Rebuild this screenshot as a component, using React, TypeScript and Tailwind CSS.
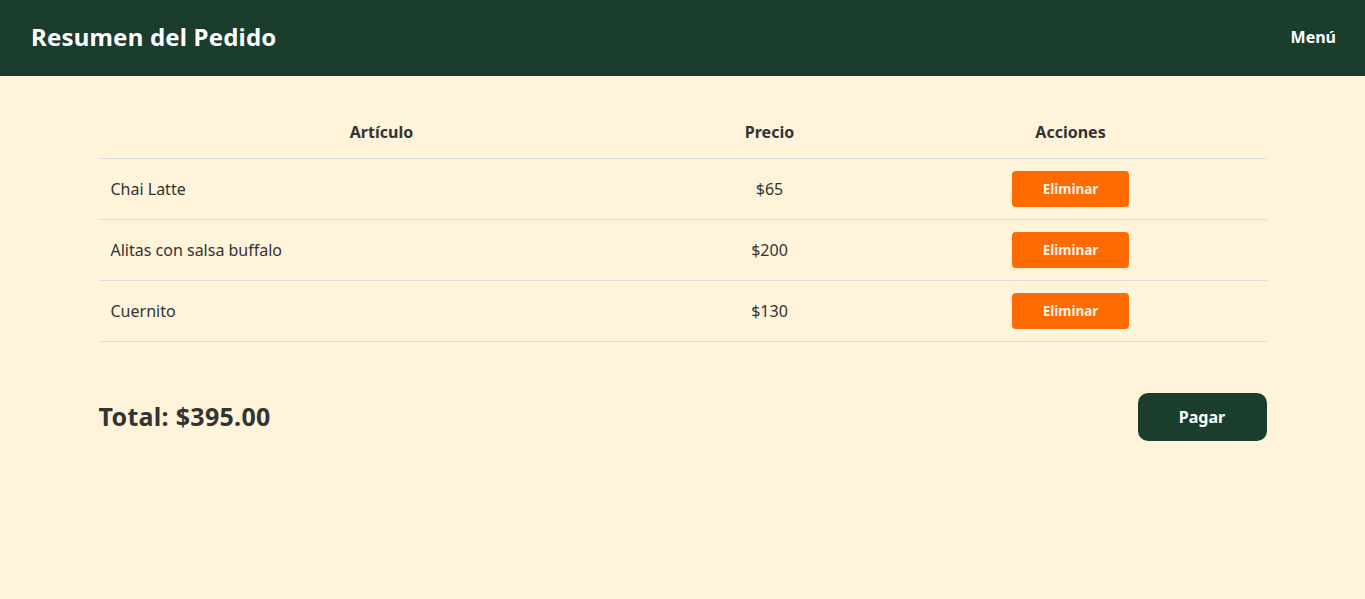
import React from "react";

const items = [
  { name: "Chai Latte", price: "$65" },
  { name: "Alitas con salsa buffalo", price: "$200" },
  { name: "Cuernito", price: "$130" },
];

export default function App() {
  return (
    <div
      className="min-h-[599px] bg-[#fff3d9] text-[#333333]"
      style={{ fontFamily: '"Noto Sans", "Open Sans", sans-serif' }}
    >
      <header className="h-[76px] bg-[#1a3d2e] flex items-center justify-between pl-[31px] pr-[29px] pb-[2px]">
        <h1 className="text-[24px] font-bold text-white tracking-[0.2px]">Resumen del Pedido</h1>
        <nav className="text-[16px] font-bold text-white">Menú</nav>
      </header>
      <main className="w-[1168px] mx-auto pt-[30px]">
        <table className="w-full border-collapse">
          <thead>
            <tr className="border-b border-[#dddddd]">
              <th className="w-[566px] py-[14px] text-[16px] leading-[24px] font-bold text-center">Artículo</th>
              <th className="w-[210px] py-[14px] text-[16px] leading-[24px] font-bold text-center">Precio</th>
              <th className="py-[14px] text-[16px] leading-[24px] font-bold text-center">Acciones</th>
            </tr>
          </thead>
          <tbody>
            {items.map((it) => (
              <tr key={it.name} className="border-b border-[#dddddd]">
                <td className="pl-[12px] pr-[12px] py-[12px] text-[16px] text-left">{it.name}</td>
                <td className="py-[12px] text-[16px] text-center">{it.price}</td>
                <td className="py-[12px] text-center">
                  <button className="w-[117px] h-[36px] bg-[#ff6b00] text-[#fff3e6] text-[13.5px] font-bold rounded-[4px]">
                    Eliminar
                  </button>
                </td>
              </tr>
            ))}
          </tbody>
        </table>
        <div className="mt-[51px] flex items-center justify-between">
          <div className="text-[25px] font-bold tracking-[0.3px]">Total: $395.00</div>
          <button className="w-[129px] h-[48px] rounded-[10px] bg-[#1a3d2e] text-white text-[16px] font-bold">
            Pagar
          </button>
        </div>
      </main>
    </div>
  );
}
